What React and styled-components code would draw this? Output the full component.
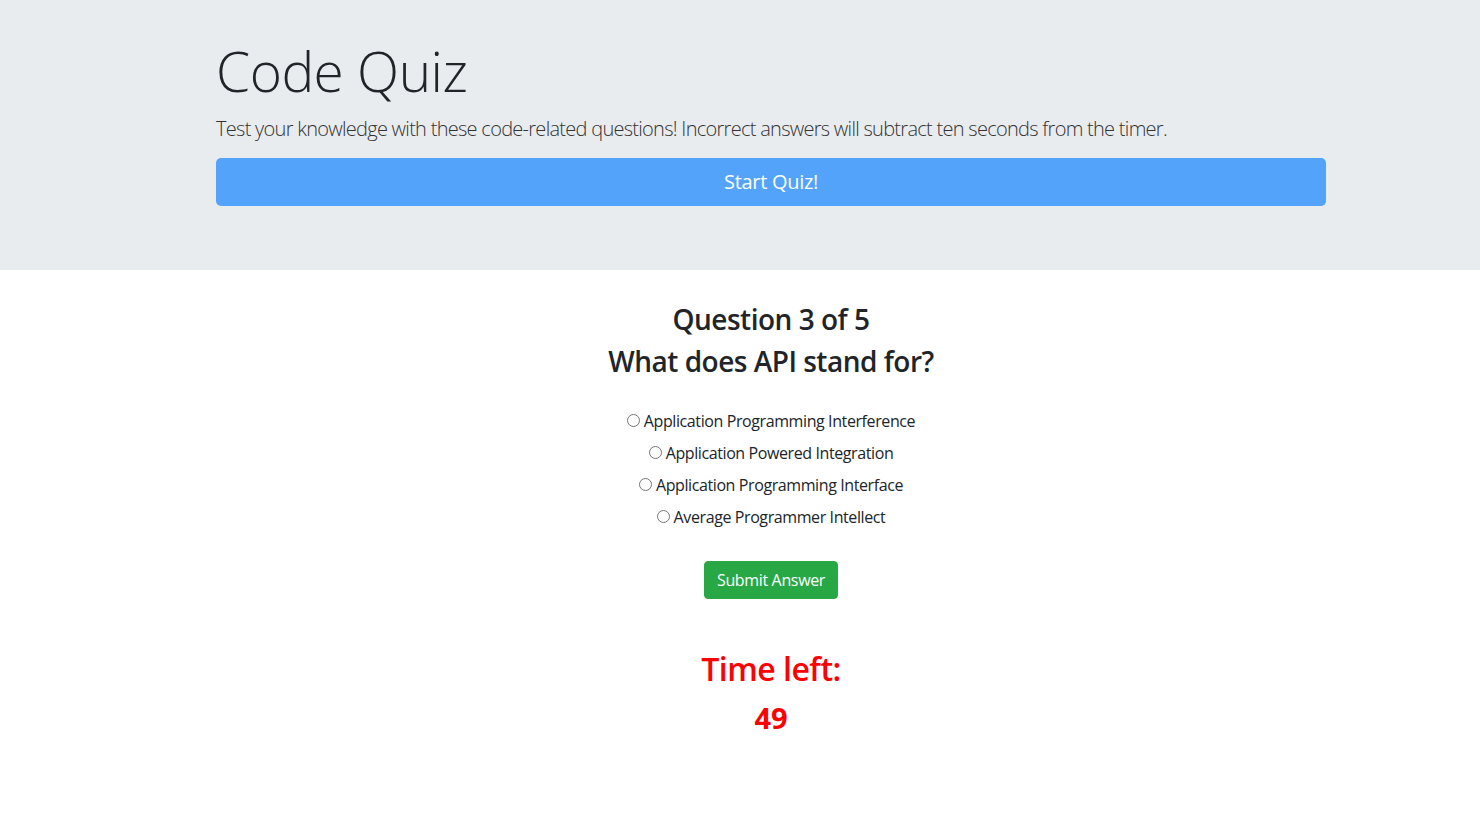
import React from "react";
import styled, { createGlobalStyle } from "styled-components";

const Global = createGlobalStyle`
  html, body { margin: 0; padding: 0; background: #fff; }
  body {
    font-family: "Open Sans", "Noto Sans", sans-serif;
    font-size: 16px;
    line-height: 1.5;
    color: #212529;
  }
  * { box-sizing: border-box; }
`;

const Jumbotron = styled.header`
  background: #e9ecef;
  padding: 38px 0 64px;
  margin-bottom: 33px;
`;

const Container = styled.div`
  width: 1110px;
  margin-left: 216px;
`;

const Title = styled.h1`
  margin: 0 0 10px;
  font-size: 55px;
  font-weight: 300;
  line-height: 1.2;
  letter-spacing: -0.5px;
`;

const Lead = styled.p`
  margin: 0 0 14px;
  font-size: 20px;
  font-weight: 300;
  line-height: 1.5;
  letter-spacing: -0.72px;
  color: #333;
`;

const StartButton = styled.button`
  display: block;
  width: 100%;
  height: 48px;
  border: 0;
  border-radius: 5px;
  background: #52a3f9;
  color: #fff;
  font-family: inherit;
  font-size: 20px;
  line-height: 1.5;
  letter-spacing: -0.3px;
  cursor: pointer;
`;

const Main = styled.main`
  display: flex;
  flex-direction: column;
  align-items: center;
  text-align: center;
`;

const Heading = styled.h3`
  margin: 0 0 8px;
  font-size: 28px;
  font-weight: 600;
  line-height: 1.2;
  letter-spacing: -0.5px;
  color: #212529;
`;

const Options = styled.div`
  display: flex;
  flex-direction: column;
  align-items: center;
  gap: 8px;
  margin-top: 23px;
`;

const Option = styled.label`
  display: flex;
  align-items: center;
  gap: 4px;
  font-size: 16px;
  line-height: 24px;
  letter-spacing: -0.4px;
  color: #212529;
`;

const Radio = styled.input`
  width: 13px;
  height: 13px;
  margin: 0 0 2px;
  accent-color: #555;
`;

const SubmitButton = styled.button`
  margin-top: 32px;
  padding: 6px 12px;
  border: 1px solid #28a745;
  border-radius: 4px;
  background: #28a745;
  color: #fff;
  font-family: inherit;
  font-size: 16px;
  line-height: 24px;
  letter-spacing: -0.35px;
  cursor: pointer;
`;

const TimerLabel = styled.h2`
  margin: 51px 0 12px;
  font-size: 32px;
  font-weight: 600;
  line-height: 1.2;
  letter-spacing: -0.5px;
  color: #ff0000;
`;

const TimerValue = styled.div`
  font-size: 29px;
  font-weight: 700;
  line-height: 1.2;
  color: #ff0000;
`;

const answers = [
  "Application Programming Interference",
  "Application Powered Integration",
  "Application Programming Interface",
  "Average Programmer Intellect",
];

export default function App() {
  return (
    <>
      <Global />
      <Jumbotron>
        <Container>
          <Title>Code Quiz</Title>
          <Lead>
            Test your knowledge with these code-related questions! Incorrect
            answers will subtract ten seconds from the timer.
          </Lead>
          <StartButton>Start Quiz!</StartButton>
        </Container>
      </Jumbotron>
      <Container>
        <Main>
          <Heading>Question 3 of 5</Heading>
          <Heading>What does API stand for?</Heading>
          <Options>
            {answers.map((a) => (
              <Option key={a}>
                <Radio type="radio" name="answer" />
                {a}
              </Option>
            ))}
          </Options>
          <SubmitButton>Submit Answer</SubmitButton>
          <TimerLabel>Time left:</TimerLabel>
          <TimerValue>49</TimerValue>
        </Main>
      </Container>
    </>
  );
}
